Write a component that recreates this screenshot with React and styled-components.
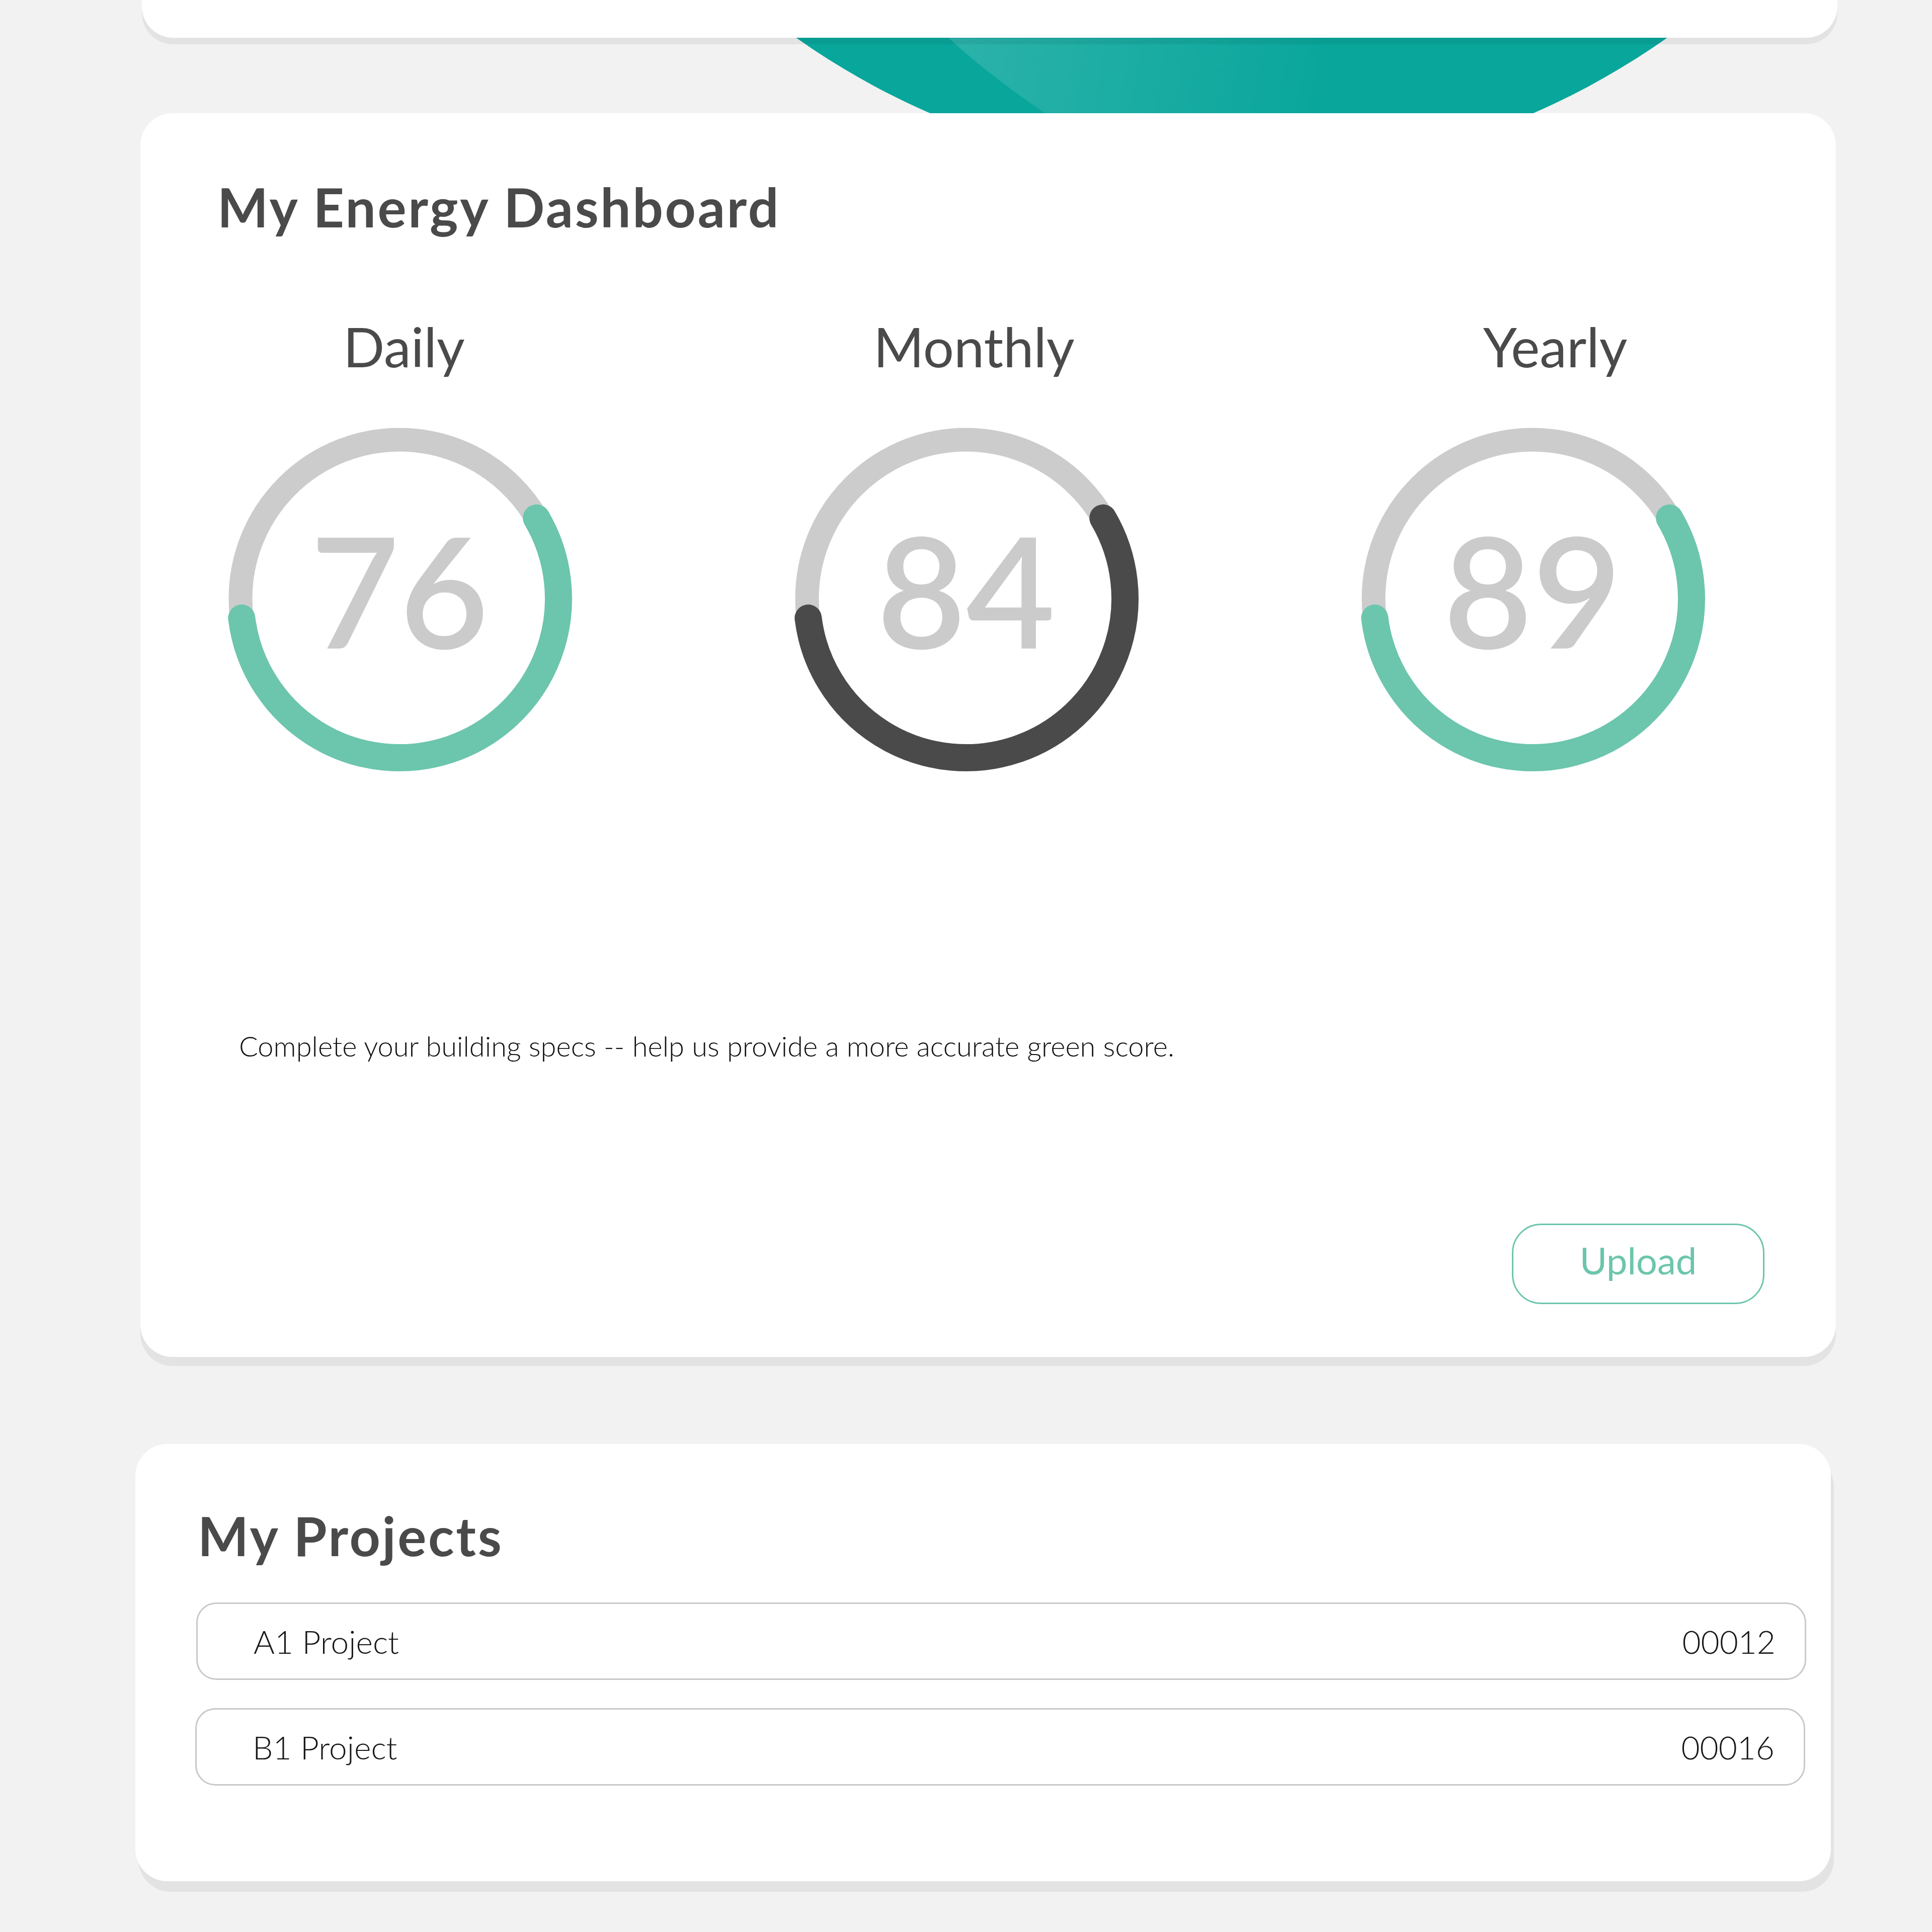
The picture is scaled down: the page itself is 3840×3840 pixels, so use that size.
import React from "react";
import styled, { createGlobalStyle } from "styled-components";

const Global = createGlobalStyle`
  html, body { margin: 0; padding: 0; background: #f2f2f2; }
  body { font-family: Lato, "Open Sans", sans-serif; }
  * { box-sizing: border-box; }
`;

const Page = styled.div`
  position: relative;
  overflow: hidden;
  width: 3840px;
  min-height: 3840px;
  background: #f2f2f2;
  padding-left: 279px;
  display: flex;
  flex-direction: column;
`;

const HeaderCircle = styled.div`
  position: absolute;
  z-index: 0;
  left: 948px;
  top: -2650px;
  width: 3000px;
  height: 3000px;
  border-radius: 50%;
  background: #09a69c;
  overflow: hidden;
`;

const Sheen = styled.div`
  position: absolute;
  left: 392px;
  top: -150px;
  width: 3300px;
  height: 3300px;
  border-radius: 50%;
  background: linear-gradient(
    100deg,
    rgba(255, 255, 255, 0.24) 14%,
    rgba(255, 255, 255, 0.12) 30%,
    rgba(255, 255, 255, 0) 47%
  );
`;

const Card = styled.section`
  position: relative;
  z-index: 1;
  width: 3370px;
  margin-left: ${(p) => p.$dx || 0}px;
  margin-top: ${(p) => p.$gap || 0}px;
  background: #ffffff;
  border-radius: 64px;
  box-shadow: ${(p) => p.$sx || 0}px ${(p) => p.$sy || 14}px 0 rgba(0, 0, 0, 0.058);
  display: flex;
  flex-direction: column;
`;

const TopCard = styled(Card)`
  height: 75px;
  border-radius: 0 0 62px 62px;
`;

const DashCard = styled(Card)`
  padding: 122px 142px 105px 153px;
`;

const ProjectsCard = styled(Card)`
  padding: 118px 49px 190px 121px;
`;

const Title = styled.h2`
  margin: 0;
  padding-left: ${(p) => p.$indent || 0}px;
  font-family: Lato, "Open Sans", sans-serif;
  font-weight: 700;
  font-size: 107px;
  line-height: 128px;
  letter-spacing: 3.6px;
  color: #4a4a4a;
`;

const GaugeRow = styled.div`
  margin-top: 148px;
  padding-left: 17px;
  display: flex;
  gap: 436px;
`;

const GaugeColumn = styled.div`
  width: 690px;
  display: flex;
  flex-direction: column;
  align-items: center;
`;

const PeriodLabel = styled.div`
  font-family: Lato, "Open Sans", sans-serif;
  font-weight: 400;
  font-size: 108px;
  line-height: 130px;
  color: #4a4a4a;
  margin-bottom: 92px;
  transform: translateX(${(p) => p.$shift || 0}px);
`;

const GaugeBox = styled.div`
  width: 690px;
  height: 690px;
  display: grid;
  place-items: center;
  & > * {
    grid-area: 1 / 1;
  }
`;

const Score = styled.div`
  font-family: Lato, "Open Sans", sans-serif;
  font-weight: 600;
  font-size: 306px;
  line-height: 306px;
  color: #cbcbcb;
  padding-bottom: 38px;
`;

const Note = styled.p`
  margin: 510px 0 0 0;
  padding-left: 43px;
  font-family: Lato, "Open Sans", sans-serif;
  font-weight: 300;
  font-size: 56px;
  line-height: 67px;
  color: #111111;
`;

const ButtonRow = styled.div`
  margin-top: 320px;
  display: flex;
  justify-content: flex-end;
`;

const OutlineButton = styled.button`
  width: 502px;
  height: 160px;
  border: 3px solid #6cc5ac;
  border-radius: 58px;
  background: #ffffff;
  color: #6cc5ac;
  font-family: Lato, "Open Sans", sans-serif;
  font-weight: 400;
  font-size: 74px;
  line-height: 1;
  padding: 0 0 14px 0;
  cursor: pointer;
`;

const ProjectList = styled.div`
  margin-top: 69px;
  display: flex;
  flex-direction: column;
  gap: 56px;
`;

const ProjectRow = styled.div`
  height: 154px;
  margin-left: ${(p) => p.$dx || 0}px;
  margin-right: ${(p) => (p.$dx ? -p.$dx : 0)}px;
  border: 3px solid #c9c9c9;
  border-radius: 40px;
  display: flex;
  align-items: center;
  justify-content: space-between;
  padding: 0 58px 0 111px;
  font-family: Lato, "Open Sans", sans-serif;
  font-weight: 300;
  font-size: 64px;
  color: #161616;
`;

const RowName = styled.span``;
const RowCode = styled.span``;

const R = 316;
const C = 345;
const polar = (deg) => {
  const a = (deg * Math.PI) / 180;
  return [C + R * Math.cos(a), C + R * Math.sin(a)];
};

function Gauge({ value, color }) {
  const [sx, sy] = polar(173);
  const [ex, ey] = polar(-30.5);
  return (
    <GaugeBox>
      <svg width="690" height="690" viewBox="0 0 690 690">
        <circle cx={C} cy={C} r={R} fill="none" stroke="#cccccc" strokeWidth="47" />
        <path
          d={`M ${sx} ${sy} A ${R} ${R} 0 1 0 ${ex} ${ey}`}
          fill="none"
          stroke={color}
          strokeWidth="54"
          strokeLinecap="round"
        />
      </svg>
      <Score>{value}</Score>
    </GaugeBox>
  );
}

const gauges = [
  { label: "Daily", value: 76, color: "#6cc5ad", shift: 9 },
  { label: "Monthly", value: 84, color: "#4a4a4a", shift: 16 },
  { label: "Yearly", value: 89, color: "#6cc5ad", shift: 45 },
];

const projects = [
  { name: "A1 Project", code: "00012", dx: 0 },
  { name: "B1 Project", code: "00016", dx: -2 },
];

export default function App() {
  return (
    <>
      <Global />
      <Page>
        <HeaderCircle>
          <Sheen />
        </HeaderCircle>
        <TopCard $dx={3} $sy={13} />
        <DashCard $gap={150} $sy={18}>
          <Title>My Energy Dashboard</Title>
          <GaugeRow>
            {gauges.map((g) => (
              <GaugeColumn key={g.label}>
                <PeriodLabel $shift={g.shift}>{g.label}</PeriodLabel>
                <Gauge value={g.value} color={g.color} />
              </GaugeColumn>
            ))}
          </GaugeRow>
          <Note>Complete your building specs -- help us provide a more accurate green score.</Note>
          <ButtonRow>
            <OutlineButton>Upload</OutlineButton>
          </ButtonRow>
        </DashCard>
        <ProjectsCard $gap={173} $dx={-10} $sx={6} $sy={21}>
          <Title $indent={3}>My Projects</Title>
          <ProjectList>
            {projects.map((p) => (
              <ProjectRow key={p.code} $dx={p.dx}>
                <RowName>{p.name}</RowName>
                <RowCode>{p.code}</RowCode>
              </ProjectRow>
            ))}
          </ProjectList>
        </ProjectsCard>
      </Page>
    </>
  );
}
